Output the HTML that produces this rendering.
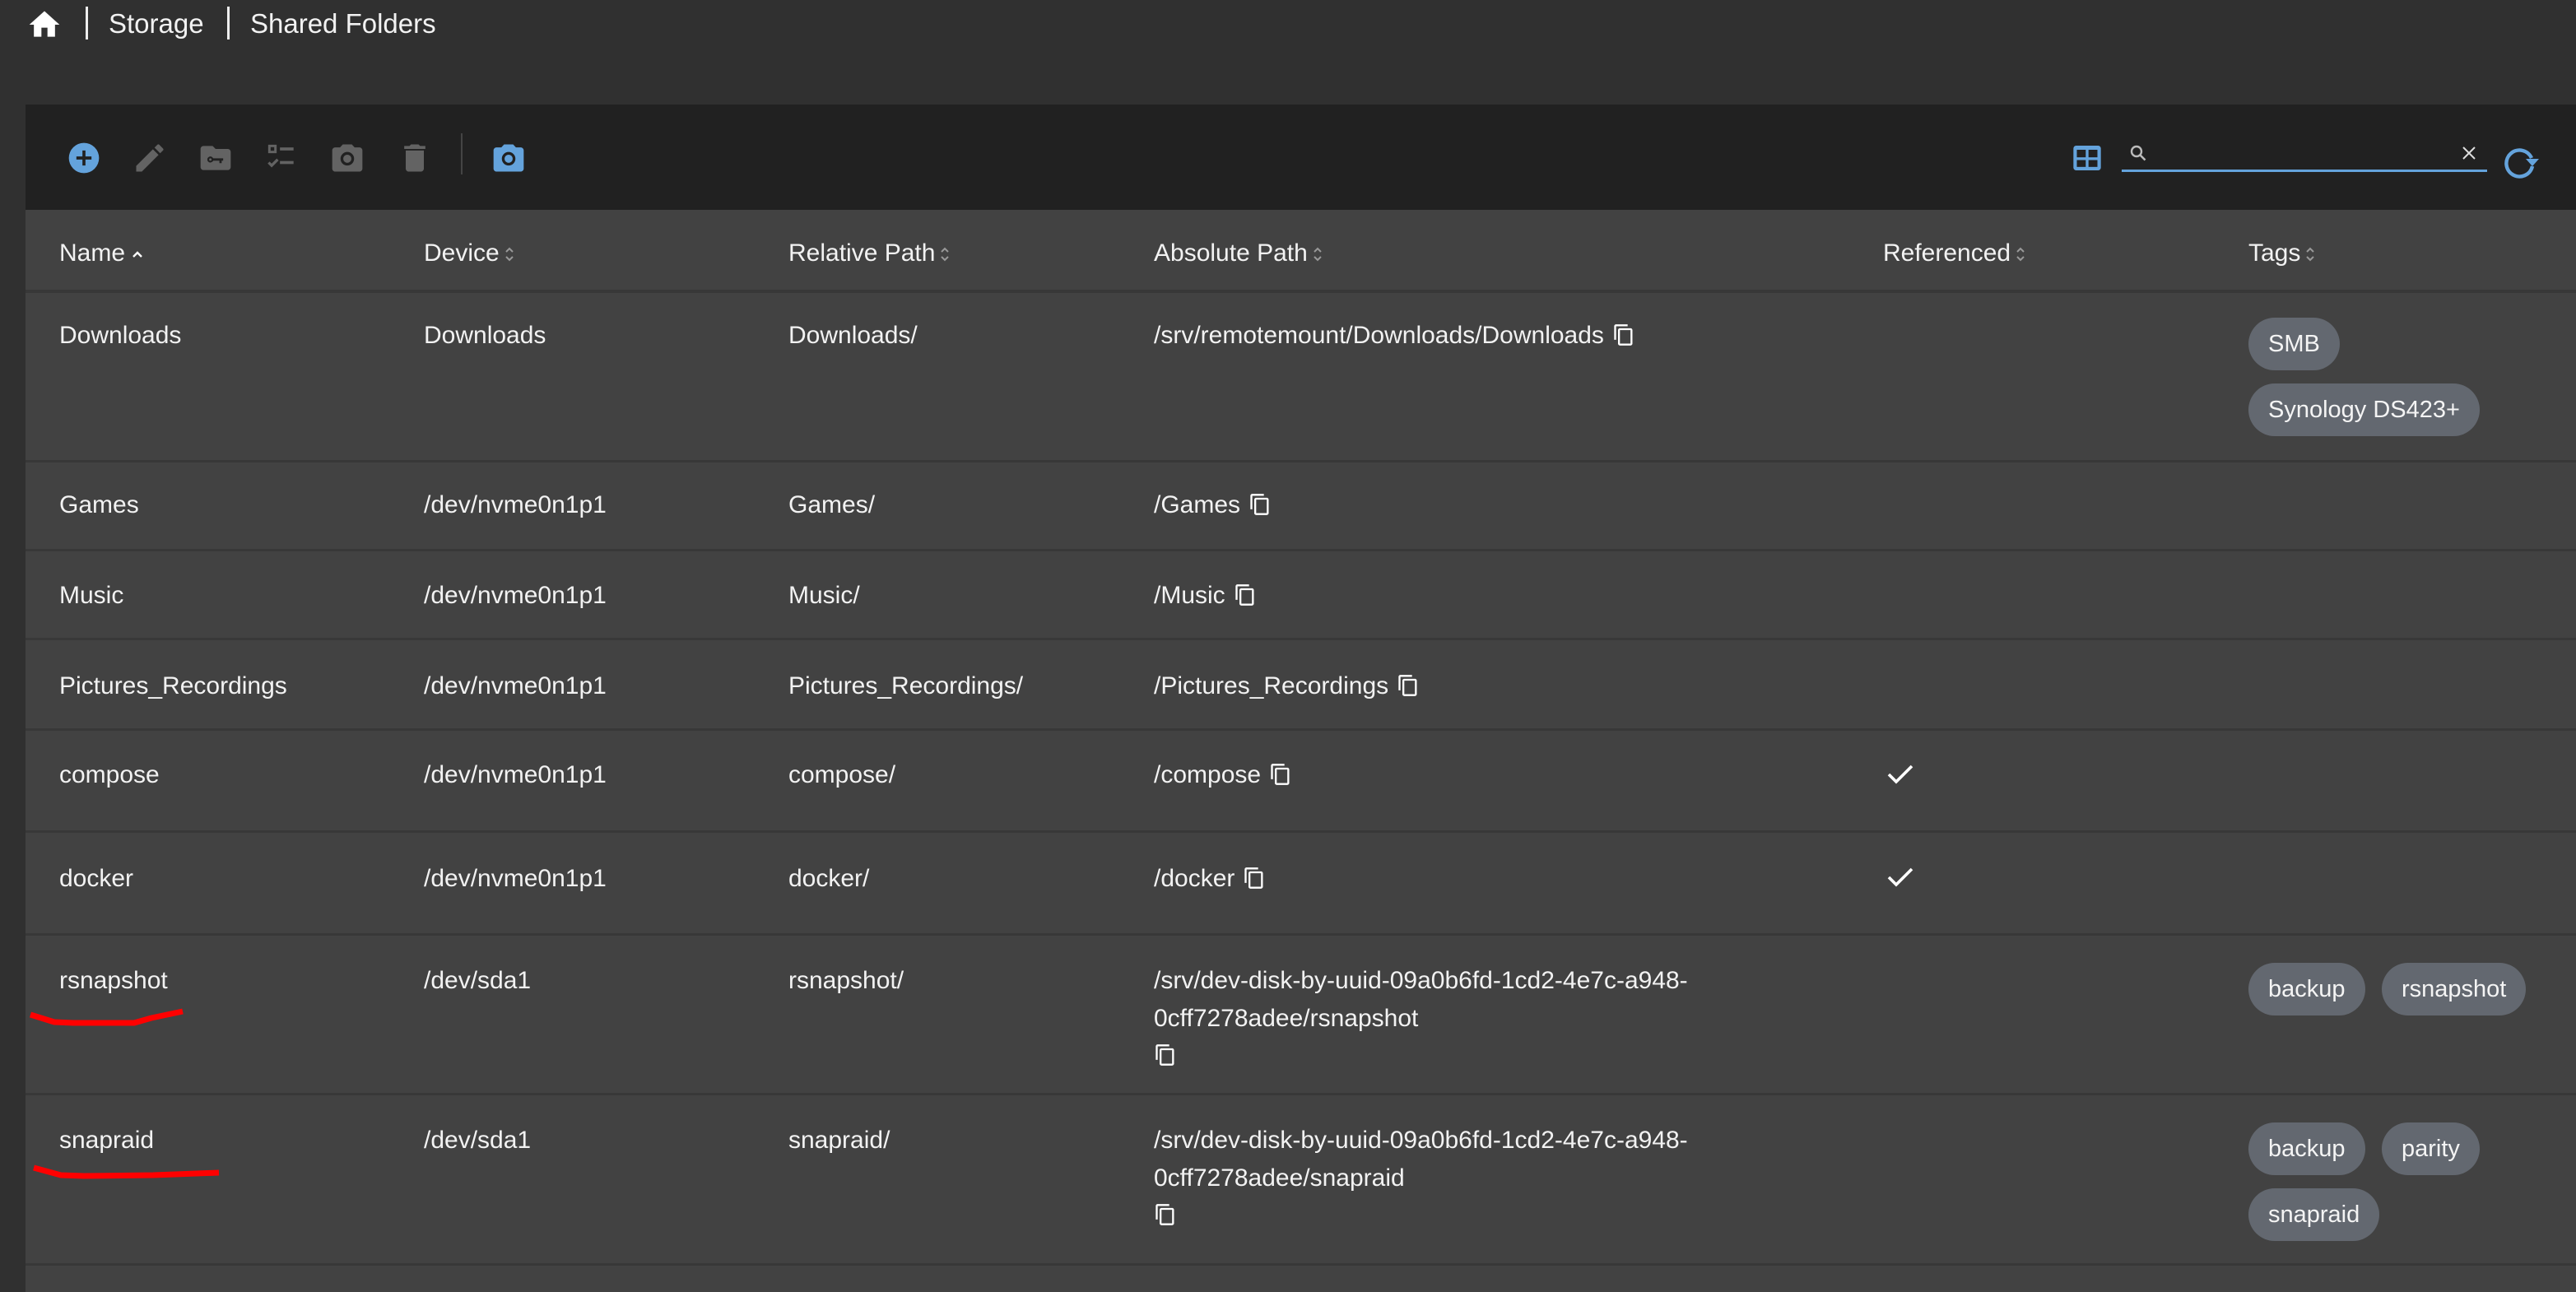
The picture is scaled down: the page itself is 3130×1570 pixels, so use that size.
<!DOCTYPE html>
<html><head><meta charset="utf-8"><style>
*{margin:0;padding:0;box-sizing:border-box}
body{width:3130px;height:1570px;background:#303030;font-family:"Liberation Sans",sans-serif;color:#fff;position:relative;overflow:hidden}
.a{position:absolute}
.t{position:absolute;font-size:30px;line-height:34px;white-space:nowrap;color:#f2f2f2}
.row{position:absolute;left:31px;right:0;background:#424242;border-bottom:3px solid #383838}
.chip{position:absolute;height:64px;border-radius:32px;background:#636870;font-size:29px;line-height:64px;padding:0 24px;color:#f4f4f4;white-space:nowrap}
.srt{display:inline-block;vertical-align:middle;margin-left:6px}
.cp{display:inline-block;vertical-align:-4px;margin-left:10px;width:28px;height:28px}
</style></head><body>
<!-- breadcrumb -->
<svg class="a" style="left:32px;top:8px" width="44" height="44" viewBox="0 0 24 24"><path fill="#fff" d="M10 20v-6h4v6h5v-8h3L12 3 2 12h3v8z"/></svg>
<div class="a" style="left:104px;top:8px;width:3px;height:40px;background:#eee"></div>
<div class="t" style="left:132px;top:10px;font-size:33px;line-height:38px">Storage</div>
<div class="a" style="left:276px;top:8px;width:3px;height:40px;background:#eee"></div>
<div class="t" style="left:304px;top:10px;font-size:33px;line-height:38px">Shared Folders</div>

<!-- card -->
<div class="a" style="left:31px;top:127px;right:0;height:1443px;background:#424242"></div>
<div class="a" style="left:31px;top:127px;right:0;height:128px;background:#212121"></div>

<!-- toolbar icons -->
<svg class="a" style="left:80px;top:170px" width="44" height="44" viewBox="0 0 24 24"><circle cx="12" cy="12" r="10" fill="#64a3dc"/><path d="M11 7h2v4h4v2h-4v4h-2v-4H7v-2h4z" fill="#212121"/></svg>
<svg class="a" style="left:160px;top:170px" width="44" height="44" viewBox="0 0 24 24"><path fill="#636363" d="M3 17.25V21h3.75L17.81 9.94l-3.75-3.75L3 17.25zM20.71 7.04a1 1 0 000-1.41l-2.34-2.34a1 1 0 00-1.41 0l-1.83 1.83 3.75 3.75 1.83-1.83z"/></svg>
<svg class="a" style="left:240px;top:170px" width="44" height="44" viewBox="0 0 24 24"><path fill="#636363" d="M10 4H4c-1.1 0-2 .9-2 2v12c0 1.1.9 2 2 2h16c1.1 0 2-.9 2-2V8c0-1.1-.9-2-2-2h-8l-2-2z"/><circle cx="8.5" cy="13" r="2" fill="#212121"/><circle cx="8.5" cy="13" r="0.8" fill="#636363"/><path d="M10 12.2h7v1.6h-1v1.6h-1.5v-1.6H10z" fill="#212121"/></svg>
<svg class="a" style="left:320px;top:170px" width="44" height="44" viewBox="0 0 24 24"><rect x="4" y="4" width="4" height="4" fill="none" stroke="#636363" stroke-width="1.6"/><rect x="11" y="5" width="9" height="2" fill="#636363"/><rect x="11" y="14" width="9" height="2" fill="#636363"/><path d="M3.5 15l2 2 4-4" fill="none" stroke="#636363" stroke-width="1.8"/></svg>
<svg class="a" style="left:400px;top:170px" width="44" height="44" viewBox="0 0 24 24"><path fill="#636363" d="M9 3L7.17 5H4c-1.1 0-2 .9-2 2v12c0 1.1.9 2 2 2h16c1.1 0 2-.9 2-2V7c0-1.1-.9-2-2-2h-3.17L15 3H9z"/><circle cx="12" cy="12.5" r="3.6" fill="none" stroke="#212121" stroke-width="1.8"/></svg>
<svg class="a" style="left:482px;top:170px" width="44" height="44" viewBox="0 0 24 24"><path fill="#636363" d="M6 19c0 1.1.9 2 2 2h8c1.1 0 2-.9 2-2V7H6v12zM19 4h-3.5l-1-1h-5l-1 1H5v2h14V4z"/></svg>
<div class="a" style="left:560px;top:162px;width:2px;height:50px;background:#444"></div>
<svg class="a" style="left:596px;top:170px" width="44" height="44" viewBox="0 0 24 24"><path fill="#64a3dc" d="M9 3L7.17 5H4c-1.1 0-2 .9-2 2v12c0 1.1.9 2 2 2h16c1.1 0 2-.9 2-2V7c0-1.1-.9-2-2-2h-3.17L15 3H9z"/><circle cx="12" cy="12.5" r="3.6" fill="none" stroke="#212121" stroke-width="1.8"/></svg>

<!-- right toolbar -->
<svg class="a" style="left:2516px;top:172px" width="40" height="40" viewBox="0 0 24 24"><rect x="2" y="3" width="20" height="18" rx="2" fill="#64a3dc"/><rect x="4.5" y="6" width="6.5" height="5.5" fill="#212121"/><rect x="13" y="6" width="6.5" height="5.5" fill="#212121"/><rect x="4.5" y="13.5" width="6.5" height="5" fill="#212121"/><rect x="13" y="13.5" width="6.5" height="5" fill="#212121"/></svg>
<svg class="a" style="left:2586px;top:174px" width="24" height="24" viewBox="0 0 24 24"><circle cx="10" cy="10" r="6" fill="none" stroke="#bbb" stroke-width="2.4"/><path d="M14.5 14.5l6 6" stroke="#bbb" stroke-width="2.6"/></svg>
<div class="a" style="left:2578px;top:206px;width:444px;height:3px;background:#64a3dc"></div>
<svg class="a" style="left:2990px;top:176px" width="20" height="20" viewBox="0 0 20 20"><path d="M3 3l14 14M17 3L3 17" stroke="#ddd" stroke-width="2"/></svg>
<svg class="a" style="left:3038px;top:172px" width="48" height="48" viewBox="0 0 24 24"><path d="M19 10A8 8 0 1 0 19.5 15" fill="none" stroke="#64a3dc" stroke-width="2.2"/><path fill="#64a3dc" d="M15.5 10.5h8l-4 4.5z"/></svg>

<!-- header -->
<div class="a" style="left:31px;top:352px;right:0;height:4px;background:#383838"></div>
<div class="t" style="left:72px;top:291px">Name<svg class="srt" width="18" height="14" viewBox="0 0 18 14"><path d="M4 10l5-5 5 5" fill="none" stroke="#fff" stroke-width="2.4"/></svg></div>
<div class="t" style="left:515px;top:291px">Device<svg class="srt" width="12" height="22" viewBox="0 0 12 22"><path d="M2 8l4-4 4 4M2 14l4 4 4-4" fill="none" stroke="#999" stroke-width="2"/></svg></div>
<div class="t" style="left:958px;top:291px">Relative Path<svg class="srt" width="12" height="22" viewBox="0 0 12 22"><path d="M2 8l4-4 4 4M2 14l4 4 4-4" fill="none" stroke="#999" stroke-width="2"/></svg></div>
<div class="t" style="left:1402px;top:291px">Absolute Path<svg class="srt" width="12" height="22" viewBox="0 0 12 22"><path d="M2 8l4-4 4 4M2 14l4 4 4-4" fill="none" stroke="#999" stroke-width="2"/></svg></div>
<div class="t" style="left:2288px;top:291px">Referenced<svg class="srt" width="12" height="22" viewBox="0 0 12 22"><path d="M2 8l4-4 4 4M2 14l4 4 4-4" fill="none" stroke="#999" stroke-width="2"/></svg></div>
<div class="t" style="left:2732px;top:291px">Tags<svg class="srt" width="12" height="22" viewBox="0 0 12 22"><path d="M2 8l4-4 4 4M2 14l4 4 4-4" fill="none" stroke="#999" stroke-width="2"/></svg></div>

<!-- row borders -->
<div class="row" style="top:356px;height:206px"></div>
<div class="row" style="top:562px;height:108px"></div>
<div class="row" style="top:670px;height:108px"></div>
<div class="row" style="top:778px;height:110px"></div>
<div class="row" style="top:888px;height:124px"></div>
<div class="row" style="top:1012px;height:125px"></div>
<div class="row" style="top:1137px;height:194px"></div>
<div class="row" style="top:1331px;height:207px"></div>

<svg width="0" height="0" style="position:absolute"><defs><symbol id="cp" viewBox="0 0 24 24"><path fill="#fff" d="M16 1H4c-1.1 0-2 .9-2 2v14h2V3h12V1zm3 4H8c-1.1 0-2 .9-2 2v14c0 1.1.9 2 2 2h11c1.1 0 2-.9 2-2V7c0-1.1-.9-2-2-2zm0 16H8V7h11v14z"/></symbol></defs></svg>

<!-- Downloads -->
<div class="t" style="left:72px;top:391px">Downloads</div>
<div class="t" style="left:515px;top:391px">Downloads</div>
<div class="t" style="left:958px;top:391px">Downloads/</div>
<div class="t" style="left:1402px;top:391px">/srv/remotemount/Downloads/Downloads<svg class="cp"><use href="#cp"/></svg></div>
<div class="chip" style="left:2732px;top:386px">SMB</div>
<div class="chip" style="left:2732px;top:466px">Synology DS423+</div>

<!-- Games -->
<div class="t" style="left:72px;top:597px">Games</div>
<div class="t" style="left:515px;top:597px">/dev/nvme0n1p1</div>
<div class="t" style="left:958px;top:597px">Games/</div>
<div class="t" style="left:1402px;top:597px">/Games<svg class="cp"><use href="#cp"/></svg></div>

<!-- Music -->
<div class="t" style="left:72px;top:707px">Music</div>
<div class="t" style="left:515px;top:707px">/dev/nvme0n1p1</div>
<div class="t" style="left:958px;top:707px">Music/</div>
<div class="t" style="left:1402px;top:707px">/Music<svg class="cp"><use href="#cp"/></svg></div>

<!-- Pictures -->
<div class="t" style="left:72px;top:817px">Pictures_Recordings</div>
<div class="t" style="left:515px;top:817px">/dev/nvme0n1p1</div>
<div class="t" style="left:958px;top:817px">Pictures_Recordings/</div>
<div class="t" style="left:1402px;top:817px">/Pictures_Recordings<svg class="cp"><use href="#cp"/></svg></div>

<!-- compose -->
<div class="t" style="left:72px;top:925px">compose</div>
<div class="t" style="left:515px;top:925px">/dev/nvme0n1p1</div>
<div class="t" style="left:958px;top:925px">compose/</div>
<div class="t" style="left:1402px;top:925px">/compose<svg class="cp"><use href="#cp"/></svg></div>
<svg class="a" style="left:2290px;top:926px" width="40" height="32" viewBox="0 0 40 32"><path d="M5 15l9 9L33 5" fill="none" stroke="#fff" stroke-width="3.6"/></svg>

<!-- docker -->
<div class="t" style="left:72px;top:1051px">docker</div>
<div class="t" style="left:515px;top:1051px">/dev/nvme0n1p1</div>
<div class="t" style="left:958px;top:1051px">docker/</div>
<div class="t" style="left:1402px;top:1051px">/docker<svg class="cp"><use href="#cp"/></svg></div>
<svg class="a" style="left:2290px;top:1051px" width="40" height="32" viewBox="0 0 40 32"><path d="M5 15l9 9L33 5" fill="none" stroke="#fff" stroke-width="3.6"/></svg>

<!-- rsnapshot -->
<div class="t" style="left:72px;top:1175px">rsnapshot</div>
<div class="t" style="left:515px;top:1175px">/dev/sda1</div>
<div class="t" style="left:958px;top:1175px">rsnapshot/</div>
<div class="t" style="left:1402px;top:1169px;line-height:46px">/srv/dev-disk-by-uuid-09a0b6fd-1cd2-4e7c-a948-<br>0cff7278adee/rsnapshot</div>
<svg class="a" style="left:1402px;top:1268px" width="28" height="28"><use href="#cp"/></svg>
<div class="chip" style="left:2732px;top:1170px">backup</div>
<div class="chip" style="left:2894px;top:1170px">rsnapshot</div>

<!-- snapraid -->
<div class="t" style="left:72px;top:1369px">snapraid</div>
<div class="t" style="left:515px;top:1369px">/dev/sda1</div>
<div class="t" style="left:958px;top:1369px">snapraid/</div>
<div class="t" style="left:1402px;top:1363px;line-height:46px">/srv/dev-disk-by-uuid-09a0b6fd-1cd2-4e7c-a948-<br>0cff7278adee/snapraid</div>
<svg class="a" style="left:1402px;top:1462px" width="28" height="28"><use href="#cp"/></svg>
<div class="chip" style="left:2732px;top:1364px">backup</div>
<div class="chip" style="left:2894px;top:1364px">parity</div>
<div class="chip" style="left:2732px;top:1444px">snapraid</div>

<!-- red underlines -->
<svg class="a" style="left:0;top:0" width="3130" height="1570"><path d="M37 1233 L66 1242 L89 1243 L163 1243 L184 1237 L222 1229" fill="none" stroke="#f00" stroke-width="7" stroke-linejoin="round"/><path d="M41 1419 L74 1428 L102 1429 L186 1428 L266 1425" fill="none" stroke="#f00" stroke-width="7" stroke-linejoin="round"/></svg>
</body></html>
